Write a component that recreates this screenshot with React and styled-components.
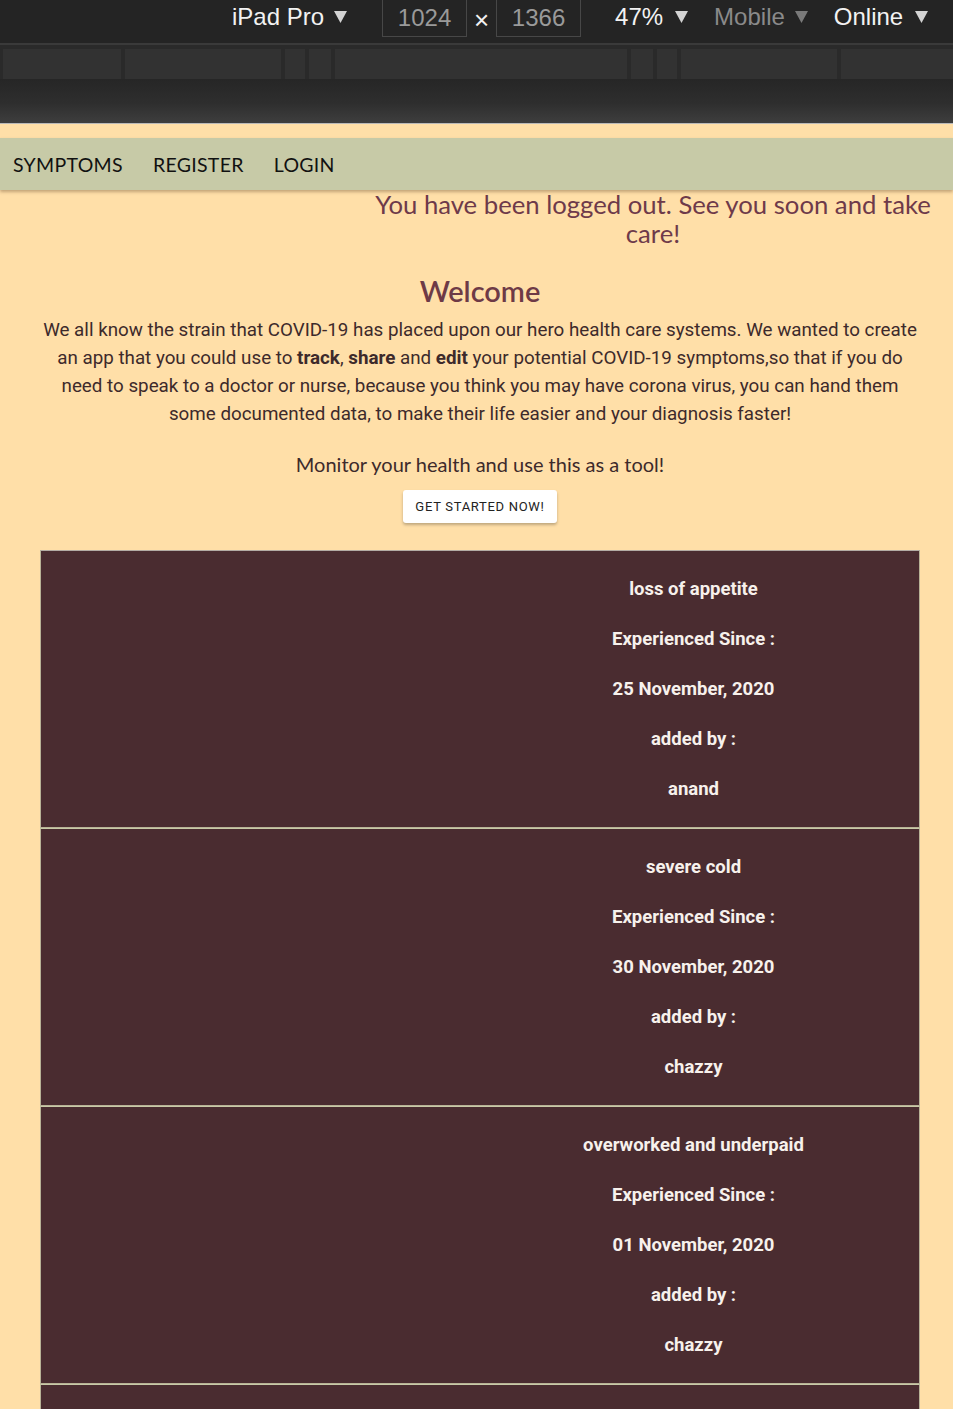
import React from "react";
import styled, { createGlobalStyle } from "styled-components";

const GlobalStyle = createGlobalStyle`
    html, body {
        margin: 0;
        padding: 0;
        background: #ffdfa8;
    }
    body {
        font-family: Roboto, "Liberation Sans", sans-serif;
    }
`;

const headingFont = `Lato, "Noto Sans", sans-serif`;

/* ---------- browser device toolbar ---------- */

const DeviceBar = styled.div`
    height: 43px;
    background: #242424;
    border-bottom: 2px solid #3a3a3a;
    display: flex;
    align-items: flex-start;
    padding-left: 232px;
    font-family: "Liberation Sans", Arial, sans-serif;
    font-size: 24px;
    color: #f2f2f2;
    overflow: hidden;
`;

const DropDown = styled.div`
    display: flex;
    align-items: center;
    height: 34px;
    margin-left: ${(p) => p.gap || 0}px;
    color: ${(p) => (p.muted ? "#8a8a8a" : "#f2f2f2")};
    white-space: nowrap;
`;

const Arrow = styled.svg`
    width: 13px;
    height: 12px;
    margin-left: ${(p) => p.gap || 10}px;
    fill: currentColor;
    opacity: 0.85;
`;

const SizeBox = styled.div`
    width: 83px;
    height: 35px;
    margin-left: ${(p) => p.gap || 0}px;
    border: 1px solid #474747;
    border-top: none;
    display: flex;
    align-items: center;
    justify-content: center;
    color: #9a9a9a;
    padding-bottom: 1px;
`;

const Times = styled.div`
    width: 29px;
    height: 40px;
    display: flex;
    align-items: center;
    justify-content: center;
    font-size: 26px;
    color: #f2f2f2;
`;

const RulerRow = styled.div`
    height: 30px;
    padding-top: 4px;
    background: #2a2a2a;
    display: flex;
    gap: 4px;
    padding-left: 3px;
    overflow: hidden;
`;

const RulerCell = styled.div`
    width: ${(p) => p.w}px;
    flex-shrink: 0;
    height: 30px;
    background: #323232;
`;

const Shade = styled.div`
    height: 44px;
    background: linear-gradient(#262626, #2e2e2e 55%, #3e3e3e);
    border-bottom: 1px solid #b9b9b9;
`;

/* ---------- page ---------- */

const Page = styled.div`
    padding-top: 14px;
`;

const NavBar = styled.nav`
    height: 52px;
    background: #c7caa7;
    display: flex;
    align-items: center;
    gap: 30px;
    padding-left: 13px;
    box-shadow: 0 2px 3px rgba(120, 90, 60, 0.45);
`;

const NavLink = styled.a`
    font-family: ${headingFont};
    font-size: 19.5px;
    color: #111;
    text-decoration: none;
    letter-spacing: 0.3px;
`;

const FlashWrap = styled.div`
    display: flex;
    justify-content: flex-end;
    padding: 0 14px 0 0;
`;

const Flash = styled.div`
    width: 572px;
    text-align: center;
    font-family: ${headingFont};
    font-size: 25.7px;
    line-height: 29px;
    color: #6e3a4a;
`;

const Intro = styled.section`
    text-align: center;
    padding: 0 33px 0 40px;
`;

const Title = styled.h1`
    margin: 25px 0 7px;
    font-family: ${headingFont};
    font-size: 29px;
    font-weight: 600;
    line-height: 36px;
    color: #6e3a46;
`;

const Lead = styled.p`
    margin: 0;
    font-size: 18.8px;
    line-height: 28px;
    color: #3d2a2b;

    b {
        font-weight: 700;
    }
`;

const Motto = styled.p`
    margin: 22px 0 12px;
    font-family: ${headingFont};
    font-size: 20px;
    line-height: 28px;
    color: #3d2a2b;
`;

const StartButton = styled.button`
    width: 154px;
    height: 33px;
    border: none;
    border-radius: 3px;
    background: #fff;
    box-shadow: 0 2px 3px rgba(0, 0, 0, 0.25);
    font-family: Roboto, "Liberation Sans", sans-serif;
    font-size: 13px;
    font-weight: 400;
    letter-spacing: 0.7px;
    color: #222;
    cursor: pointer;
`;

const List = styled.div`
    margin: 27px 33px 0 40px;
    display: flex;
    flex-direction: column;
`;

const Card = styled.div`
    display: grid;
    grid-template-columns: 427px 1fr;
    background: #4a2c30;
    border: 1px solid #b8b296;
    border-top: ${(p) => (p.first ? "1px solid #b3aca4" : "1px solid #c8caa7")};
    padding: 13px 0;
`;

const CardImage = styled.div``;

const CardBody = styled.div`
    display: flex;
    flex-direction: column;
    align-items: center;
`;

const CardLine = styled.p`
    margin: 0;
    height: 50px;
    line-height: 50px;
    font-size: 18.5px;
    font-weight: 700;
    color: #f7f1ec;
`;

const symptoms = [
    { name: "loss of appetite", since: "25 November, 2020", by: "anand" },
    { name: "severe cold", since: "30 November, 2020", by: "chazzy" },
    { name: "overworked and underpaid", since: "01 November, 2020", by: "chazzy" },
    { name: "headache", since: "02 December, 2020", by: "anand" },
];

const rulerCells = [118, 156, 20, 22, 292, 22, 20, 156, 120];

const Tri = ({ gap }) => (
    <Arrow gap={gap} viewBox="0 0 13 12">
        <path d="M0 0 L13 0 L6.5 12 Z" />
    </Arrow>
);

const App = () => {
    return (
        <>
            <GlobalStyle />
            <DeviceBar>
                <DropDown>
                    iPad Pro
                    <Tri gap={10} />
                </DropDown>
                <SizeBox gap={35}>1024</SizeBox>
                <Times>×</Times>
                <SizeBox>1366</SizeBox>
                <DropDown gap={34}>
                    47%
                    <Tri gap={12} />
                </DropDown>
                <DropDown gap={26} muted>
                    Mobile
                    <Tri gap={10} />
                </DropDown>
                <DropDown gap={26}>
                    Online
                    <Tri gap={12} />
                </DropDown>
            </DeviceBar>
            <RulerRow>
                {rulerCells.map((w, i) => (
                    <RulerCell key={i} w={w} />
                ))}
            </RulerRow>
            <Shade />

            <Page>
                <NavBar>
                    <NavLink href="#">SYMPTOMS</NavLink>
                    <NavLink href="#">REGISTER</NavLink>
                    <NavLink href="#">LOGIN</NavLink>
                </NavBar>
                <FlashWrap>
                    <Flash>You have been logged out. See you soon and take care!</Flash>
                </FlashWrap>

                <Intro>
                    <Title>Welcome</Title>
                    <Lead>
                        We all know the strain that COVID-19 has placed upon our hero health care
                        systems. We wanted to create an app that you could use to <b>track</b>,{" "}
                        <b>share</b> and <b>edit</b> your potential COVID-19 symptoms,so that if you
                        do need to speak to a doctor or nurse, because you think you may have corona
                        virus, you can hand them some documented data, to make their life easier and
                        your diagnosis faster!
                    </Lead>
                    <Motto>Monitor your health and use this as a tool!</Motto>
                    <StartButton>GET STARTED NOW!</StartButton>
                </Intro>

                <List>
                    {symptoms.map((s, i) => (
                        <Card key={i} first={i === 0}>
                            <CardImage />
                            <CardBody>
                                <CardLine>{s.name}</CardLine>
                                <CardLine>Experienced Since :</CardLine>
                                <CardLine>{s.since}</CardLine>
                                <CardLine>added by :</CardLine>
                                <CardLine>{s.by}</CardLine>
                            </CardBody>
                        </Card>
                    ))}
                </List>
            </Page>
        </>
    );
};

export default App;
